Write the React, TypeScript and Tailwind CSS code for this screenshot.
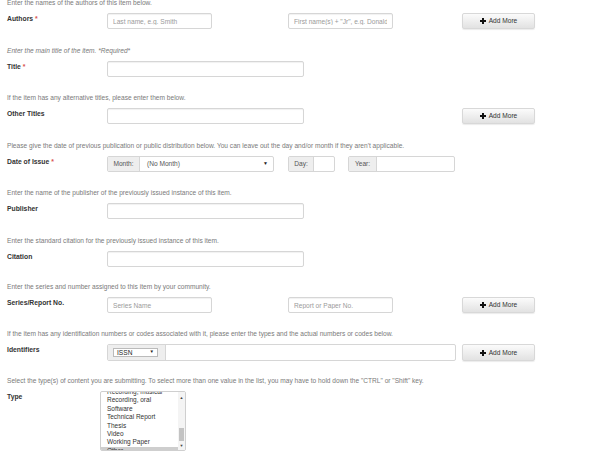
import type { ReactNode } from 'react';

const inputCls =
    'h-[16px] rounded-[2px] border border-[#d6d6d6] bg-white px-[5px] text-[6.6px] text-[#555] placeholder:text-[#9a9a9a] shadow-[inset_0_1px_1px_rgba(0,0,0,0.06)] outline-none';

interface BlockProps {
    help: string;
    italic?: boolean;
    label: string;
    required?: boolean;
    className?: string;
    children: ReactNode;
}

const Block = ({ help, italic, label, required, className, children }: BlockProps) => (
    <div className={className}>
        <div className={`h-[9px] whitespace-nowrap text-[6.6px] leading-[9px] text-[#7a7a7a] ${italic ? 'italic' : ''}`}>
            {help}
        </div>
        <div className="mt-[6px] flex">
            <div className="w-[100px] shrink-0 text-[6.8px] font-bold leading-[11px] text-[#333]">
                {label}
                {required && <span className="text-[#d9534f]"> *</span>}
            </div>
            <div className="flex flex-1 items-start">{children}</div>
        </div>
    </div>
);

const Plus = () => (
    <svg width="6" height="6" viewBox="0 0 6 6">
        <rect x="2" y="0" width="2" height="6" fill="#111" />
        <rect x="0" y="2" width="6" height="2" fill="#111" />
    </svg>
);

const AddMore = ({ className }: { className?: string }) => (
    <button
        className={`flex h-[16px] w-[73px] items-center justify-center gap-[3px] rounded-[2px] border border-[#d8d8d8] bg-linear-to-b from-[#fbfbfb] to-[#e2e2e2] text-[6.6px] text-[#333] shadow-[0_1px_1px_rgba(0,0,0,0.08)] ${className ?? ''}`}
    >
        <Plus />
        <span>Add More</span>
    </button>
);

const Addon = ({ text, w }: { text: string; w: string }) => (
    <div className={`flex h-full items-center justify-center border-r border-[#d6d6d6] bg-[#eee] text-[6.6px] text-[#555] ${w}`}>
        {text}
    </div>
);

const types = [
    'Recording, musical',
    'Recording, oral',
    'Software',
    'Technical Report',
    'Thesis',
    'Video',
    'Working Paper',
];

export default function App() {
    return (
        <div className="h-[456px] w-[600px] overflow-hidden bg-white pl-[7px] font-['Liberation_Sans',Arial,sans-serif]">
            <Block help="Enter the names of the authors of this item below." label="Authors" required className="-mt-[2px]">
                <input className={`${inputCls} w-[105px]`} placeholder="Last name, e.g. Smith" />
                <input className={`${inputCls} ml-[76px] w-[105px]`} placeholder='First name(s) + "Jr", e.g. Donald' />
                <AddMore className="ml-[69px]" />
            </Block>

            <Block help="Enter the main title of the item. *Required*" italic label="Title" required className="mt-[17px]">
                <input className={`${inputCls} w-[197px]`} />
            </Block>

            <Block help="If the item has any alternative titles, please enter them below." label="Other Titles" className="mt-[16px]">
                <input className={`${inputCls} w-[197px]`} />
                <AddMore className="ml-[158px]" />
            </Block>

            <Block
                help="Please give the date of previous publication or public distribution below. You can leave out the day and/or month if they aren't applicable."
                label="Date of Issue"
                required
                className="mt-[17px]"
            >
                <div className="flex h-[16px] w-[167px] overflow-hidden rounded-[2px] border border-[#d6d6d6] bg-white">
                    <Addon text="Month:" w="w-[32px]" />
                    <div className="flex flex-1 items-center justify-between pl-[7px] pr-[5px] text-[6.6px] text-[#555]">
                        <span>(No Month)</span>
                        <span className="text-[5px] text-[#222]">▼</span>
                    </div>
                </div>
                <div className="ml-[14px] flex h-[16px] w-[47px] overflow-hidden rounded-[2px] border border-[#d6d6d6] bg-white">
                    <Addon text="Day:" w="w-[25px]" />
                </div>
                <div className="ml-[13px] flex h-[16px] w-[107px] overflow-hidden rounded-[2px] border border-[#d6d6d6] bg-white">
                    <Addon text="Year:" w="w-[28px]" />
                </div>
            </Block>

            <Block help="Enter the name of the publisher of the previously issued instance of this item." label="Publisher" className="mt-[16px]">
                <input className={`${inputCls} w-[197px]`} />
            </Block>

            <Block help="Enter the standard citation for the previously issued instance of this item." label="Citation" className="mt-[17px]">
                <input className={`${inputCls} w-[197px]`} />
            </Block>

            <Block help="Enter the series and number assigned to this item by your community." label="Series/Report No." className="mt-[15px]">
                <input className={`${inputCls} w-[105px]`} placeholder="Series Name" />
                <input className={`${inputCls} ml-[76px] w-[105px]`} placeholder="Report or Paper No." />
                <AddMore className="ml-[69px]" />
            </Block>

            <Block
                help="If the item has any identification numbers or codes associated with it, please enter the types and the actual numbers or codes below."
                label="Identifiers"
                className="mt-[16px]"
            >
                <div className="flex h-[17px] w-[349px] overflow-hidden rounded-[2px] border border-[#d6d6d6] bg-white">
                    <div className="flex h-full w-[58px] items-center border-r border-[#d6d6d6] bg-[#eee] pl-[5px]">
                        <div className="flex h-[9px] w-[45px] items-center justify-between border border-[#bbb] bg-white pl-[3px] pr-[3px] text-[6.6px] text-[#222]">
                            <span>ISSN</span>
                            <span className="text-[4.5px]">▼</span>
                        </div>
                    </div>
                </div>
                <AddMore className="ml-[6px] h-[17px]" />
            </Block>

            <Block
                help={'Select the type(s) of content you are submitting. To select more than one value in the list, you may have to hold down the "CTRL" or "Shift" key.'}
                label="Type"
                className="mt-[15px]"
            >
                <div className="-ml-[7px] flex h-[60px] w-[86px] overflow-hidden rounded-[2px] border border-[#cfcfcf] bg-white">
                    <div className="flex-1 overflow-hidden">
                        <div className="-mt-[4px] text-[6.5px] leading-[8.4px] text-[#333]">
                            {types.map((t) => (
                                <div key={t} className="pl-[6px]">
                                    {t}
                                </div>
                            ))}
                            <div className="bg-[#cecece] pl-[6px]">Other</div>
                        </div>
                    </div>
                    <div className="flex w-[7px] flex-col items-center bg-[#f4f4f4]">
                        <span className="mt-[3px] text-[4px] leading-[5px] text-[#444]">▲</span>
                        <div className="flex-1" />
                        <div className="h-[13px] w-[5px] bg-[#c3c3c3]" />
                        <span className="mb-[2px] mt-[2px] text-[4px] leading-[5px] text-[#444]">▼</span>
                    </div>
                </div>
            </Block>
        </div>
    );
}
